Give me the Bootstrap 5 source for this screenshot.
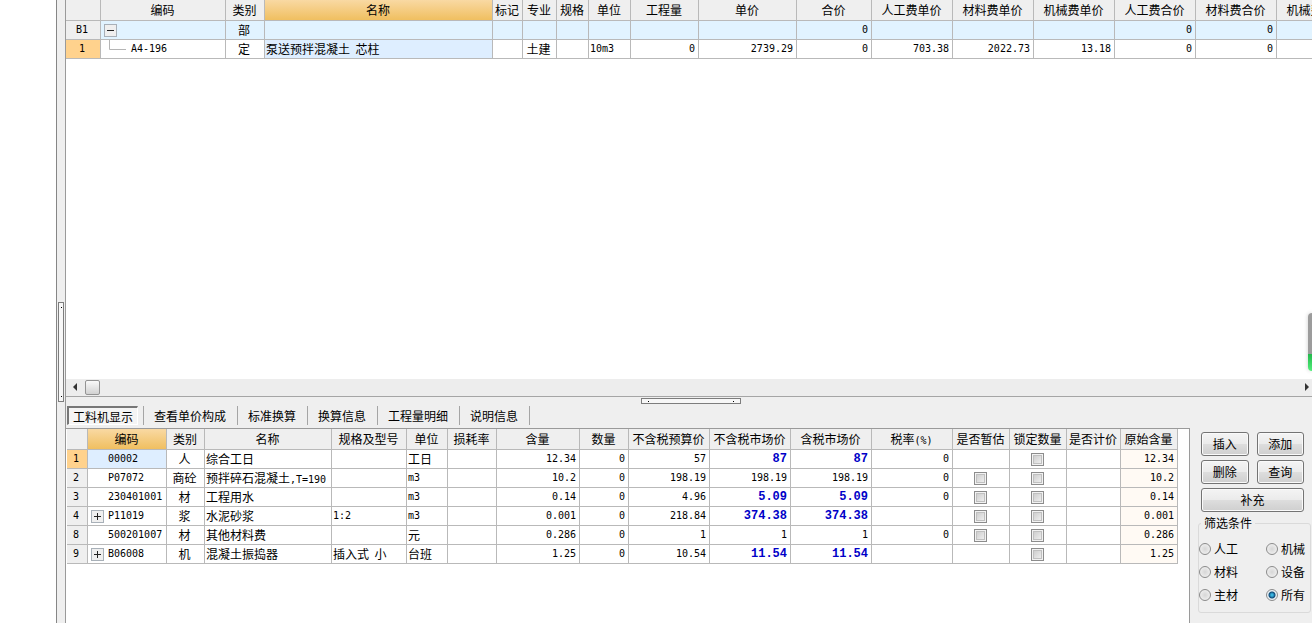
<!DOCTYPE html>
<html lang="zh-CN">
<head>
<meta charset="utf-8">
<meta name="viewport" content="width=device-width, initial-scale=1">
<title>工料机显示</title>
<link rel="stylesheet" href="https://cdn.jsdelivr.net/npm/bootstrap@5.3.0/dist/css/bootstrap.min.css">
<style>
  :root { --face: #efefef; --line: #b9b9b9; --edge: #9a9a9a; }
  body { font-family: "Noto Sans CJK SC", sans-serif; font-size: 12px; line-height: 18px; color: #000; background: #fff; }
  .asc { font-family: "DejaVu Sans Mono", monospace; font-size: 10px; }
  span.asc { line-height: 12px; }
  .gutter { width: 56px; }
  .vsplit { width: 10px; background: var(--face); border-left: 1px solid #868686; border-right: 1px solid var(--edge); padding: 0 1px 221px; }
  .grip { border: 1px solid #7d7d7d; background: #f7f7f7; padding: 4px 1px; }
  .grip i { width: 1px; height: 1px; background: #000; }
  .vsplit .grip { height: 100px; width: 6px; }
  .hsplit { height: 9px; padding-top: 1px; padding-left: 4px; }
  .hsplit .grip { width: 100px; height: 6px; padding: 1px 6px; }

  .grid { border-collapse: separate; border-spacing: 0; table-layout: fixed; width: 100px; }
  .grid th, .grid td { height: 19px; padding: 0 3px 0 1px; border-right: 1px solid var(--line); border-bottom: 1px solid var(--line); white-space: nowrap; overflow: hidden; font-weight: 400; line-height: 18px; vertical-align: middle; }
  .grid thead th { height: 21px; padding: 0 1px 0 0; text-align: center; background: var(--face); line-height: 20px; }
  .grid thead th.hot { background: linear-gradient(#f9d9a3, #f0bf60); }
  .grid tbody th { background: var(--face); text-align: center; }
  .grid tbody tr.cur th { background: #ffd28d; }
  .grid .num { font-family: "DejaVu Sans Mono", monospace; font-size: 10px; text-align: right; }
  .grid .price { font: bold 12px/18px "Liberation Mono", monospace; color: #0000c8; text-align: right; }
  .grid .sel { background: #deeeff; }
  .grid .orig { background: #fffaf4; }
  .grid tr.section td { background: #e1f3ff; }
  .grid .code { padding: 0; }
  .node { width: 20px; height: 18px; padding-left: 3px; flex: none; }
  .toggle { width: 13px; height: 13px; padding: 0; border: 1px solid #a8b0b8; background: #efefef; color: #222; flex: none; display: flex; }

  .hbar { height: 17px; background: #ededed; padding: 0 2px 1px 6px; }
  .thumb { width: 15px; height: 15px; border: 1px solid #949494; border-radius: 2px; background: linear-gradient(#fafafa, #d2d2d2); margin-left: 7px; }
  .lower { background: var(--face); border-top: 1px solid #a5a5a5; min-height: 227px; }
  .modes { height: 22px; }
  .modes li { border-right: 1px solid #a5a5a5; height: 19px; }
  .modes button { display: block; height: 19px; border: 0; background: transparent; padding: 0 11px 0 10px; font-size: 12px; line-height: 18px; color: #000; }
  .modes .mode-on { border: 1px solid #fff; border-top: 2px solid #777; border-left: 2px solid #777; padding: 0 4px; line-height: 15px; background: #f4f4f4; margin: 0 5px 0 1px; }
  .detail { border-top: 1px solid var(--edge); border-right: 1px solid var(--edge); padding-left: 1px; background: #fff; }

  .side { width: 122px; padding: 4px 8px 0 11px; flex: none; }
  .side .btn { font-size: 12px; line-height: 20px; padding: 0; height: 24px; color: #000; border: 1px solid #747474; border-radius: 3px; background: linear-gradient(#f4f4f4, #ebebeb 48%, #dddddd 52%, #cfcfcf); box-shadow: inset 0 0 0 1px #fafafa; }
  .filter { border: 1px solid #dadada; border-radius: 3px; margin: 3px -7px 0 -3px; padding: 6px 0 6px; }
  .filter legend { float: none; width: auto; font-size: 12px; line-height: 16px; margin: 0 0 0 2px; padding: 0 3px; }
  .filter label { height: 23px; gap: 3px; }
  .filter .opt { width: 67px; }
  .filter input { appearance: none; width: 12px; height: 12px; margin: 0; border: 1px solid #8b8b8b; border-radius: 50%; background: radial-gradient(#d6d6d6, #f6f6f6); flex: none; }
  .filter input:checked { background: radial-gradient(circle, #38b5e0 0 1px, #0f4a78 3px, #e8f0f5 4px); }
  .tick { appearance: none; display: block; width: 13px; height: 13px; margin: 0 auto; border: 1px solid #8c8c8c; background: linear-gradient(135deg, #c6c6c6, #f6f6f6); box-shadow: inset 0 0 0 1px #f2f2f2, inset 0 0 0 2px #c0c0c0; }
  .meter { right: 0; bottom: 252px; width: 4px; height: 58px; border-radius: 4px 0 0 4px; background: linear-gradient(#9c9c9c 0 41px, #22b84c 41px, #52ee7a); box-shadow: 0 0 4px #ccc; }
</style>
</head>
<body>
<div class="d-flex min-vh-100 overflow-hidden position-relative">
  <div class="gutter flex-shrink-0"></div>
  <div class="vsplit flex-shrink-0 d-flex align-items-end">
    <div class="grip d-flex flex-column justify-content-between align-items-center"><i></i><i></i></div>
  </div>
  <main class="d-flex flex-column flex-grow-1 overflow-hidden">
    <section class="flex-grow-1 d-flex flex-column">
      <div class="flex-grow-1 overflow-hidden">
        <table class="grid">
          <colgroup><col style="width:35px"><col style="width:125px"><col style="width:39px"><col style="width:228px"><col style="width:30px"><col style="width:34px"><col style="width:32px"><col style="width:42px"><col style="width:68px"><col style="width:98px"><col style="width:75px"><col style="width:81px"><col style="width:81px"><col style="width:81px"><col style="width:81px"><col style="width:81px"><col style="width:81px"></colgroup>
          <thead><tr><th></th><th>编码</th><th>类别</th><th class="hot">名称</th><th>标记</th><th>专业</th><th>规格</th><th>单位</th><th>工程量</th><th>单价</th><th>合价</th><th>人工费单价</th><th>材料费单价</th><th>机械费单价</th><th>人工费合价</th><th>材料费合价</th><th>机械费合价</th></tr></thead>
          <tbody>
            <tr class="section"><th class="asc">B1</th><td class="code"><div class="node d-flex align-items-center"><button class="toggle" aria-label="折叠"><svg width="11" height="11"><path d="M2 5.500h7" stroke="currentColor"/></svg></button></div></td><td class="text-center">部</td><td></td><td></td><td></td><td></td><td></td><td></td><td></td><td class="num">0</td><td></td><td></td><td></td><td class="num">0</td><td class="num">0</td><td></td></tr>
            <tr class="cur"><th class="asc">1</th><td class="code"><div class="d-flex align-items-center"><svg width="30" height="18" class="flex-shrink-0"><path d="M8.500 0V9.500H25" fill="none" stroke="#b5b5b5"/></svg><span class="asc">A4-196</span></div></td><td class="text-center">定</td><td class="sel">泵送预拌混凝土&nbsp; 芯柱</td><td></td><td class="text-center">土建</td><td></td><td class="asc">10m3</td><td class="num">0</td><td class="num">2739.29</td><td class="num">0</td><td class="num">703.38</td><td class="num">2022.73</td><td class="num">13.18</td><td class="num">0</td><td class="num">0</td><td></td></tr>
          </tbody>
        </table>
      </div>
      <div class="hbar d-flex align-items-center">
        <svg width="6" height="8"><path d="M5 0v8L1 4z" fill="#333"/></svg>
        <div class="thumb"></div>
        <svg class="ms-auto" width="6" height="8"><path d="M1 0v8l4-4z" fill="#333"/></svg>
      </div>
    </section>
    <section class="lower d-flex flex-column">
      <div class="hsplit d-flex justify-content-center align-items-start">
        <div class="grip d-flex justify-content-between align-items-center"><i></i><i></i></div>
      </div>
      <ul class="modes list-unstyled d-flex m-0">
        <li><button class="mode-on">工料机显示</button></li>
        <li><button>查看单价构成</button></li>
        <li><button>标准换算</button></li>
        <li><button>换算信息</button></li>
        <li><button>工程量明细</button></li>
        <li><button>说明信息</button></li>
      </ul>
      <div class="d-flex flex-grow-1">
        <div class="detail flex-grow-1 overflow-hidden">
          <table class="grid">
            <colgroup><col style="width:21px"><col style="width:79px"><col style="width:38px"><col style="width:127px"><col style="width:75px"><col style="width:41px"><col style="width:49px"><col style="width:83px"><col style="width:49px"><col style="width:81px"><col style="width:81px"><col style="width:81px"><col style="width:81px"><col style="width:57px"><col style="width:57px"><col style="width:54px"><col style="width:57px"></colgroup>
            <thead><tr><th></th><th class="hot">编码</th><th>类别</th><th>名称</th><th>规格及型号</th><th>单位</th><th>损耗率</th><th>含量</th><th>数量</th><th>不含税预算价</th><th>不含税市场价</th><th>含税市场价</th><th>税率<span class="asc">(%)</span></th><th>是否暂估</th><th>锁定数量</th><th>是否计价</th><th>原始含量</th></tr></thead>
            <tbody>
              <tr class="cur"><th class="asc">1</th><td class="code sel"><div class="d-flex align-items-center"><span class="node"></span><span class="asc">00002</span></div></td><td class="text-center">人</td><td>综合工日</td><td></td><td>工日</td><td></td><td class="num">12.34</td><td class="num">0</td><td class="num">57</td><td class="price">87</td><td class="price">87</td><td class="num">0</td><td></td><td><input type="checkbox" class="tick" aria-label="锁定数量"></td><td></td><td class="num orig">12.34</td></tr>
              <tr><th class="asc">2</th><td class="code"><div class="d-flex align-items-center"><span class="node"></span><span class="asc">P07072</span></div></td><td class="text-center">商砼</td><td>预拌碎石混凝土<span class="asc">,T=190</span></td><td></td><td class="asc">m3</td><td></td><td class="num">10.2</td><td class="num">0</td><td class="num">198.19</td><td class="num">198.19</td><td class="num">198.19</td><td class="num">0</td><td><input type="checkbox" class="tick" aria-label="是否暂估"></td><td><input type="checkbox" class="tick" aria-label="锁定数量"></td><td></td><td class="num orig">10.2</td></tr>
              <tr><th class="asc">3</th><td class="code"><div class="d-flex align-items-center"><span class="node"></span><span class="asc">230401001</span></div></td><td class="text-center">材</td><td>工程用水</td><td></td><td class="asc">m3</td><td></td><td class="num">0.14</td><td class="num">0</td><td class="num">4.96</td><td class="price">5.09</td><td class="price">5.09</td><td class="num">0</td><td><input type="checkbox" class="tick" aria-label="是否暂估"></td><td><input type="checkbox" class="tick" aria-label="锁定数量"></td><td></td><td class="num orig">0.14</td></tr>
              <tr><th class="asc">4</th><td class="code"><div class="d-flex align-items-center"><span class="node d-flex align-items-center"><button class="toggle" aria-label="展开"><svg width="11" height="11"><path d="M2 5.500h7M5.500 2v7" stroke="currentColor"/></svg></button></span><span class="asc">P11019</span></div></td><td class="text-center">浆</td><td>水泥砂浆</td><td class="asc">1:2</td><td class="asc">m3</td><td></td><td class="num">0.001</td><td class="num">0</td><td class="num">218.84</td><td class="price">374.38</td><td class="price">374.38</td><td></td><td><input type="checkbox" class="tick" aria-label="是否暂估"></td><td><input type="checkbox" class="tick" aria-label="锁定数量"></td><td></td><td class="num orig">0.001</td></tr>
              <tr><th class="asc">8</th><td class="code"><div class="d-flex align-items-center"><span class="node"></span><span class="asc">500201007</span></div></td><td class="text-center">材</td><td>其他材料费</td><td></td><td>元</td><td></td><td class="num">0.286</td><td class="num">0</td><td class="num">1</td><td class="num">1</td><td class="num">1</td><td class="num">0</td><td><input type="checkbox" class="tick" aria-label="是否暂估"></td><td><input type="checkbox" class="tick" aria-label="锁定数量"></td><td></td><td class="num orig">0.286</td></tr>
              <tr><th class="asc">9</th><td class="code"><div class="d-flex align-items-center"><span class="node d-flex align-items-center"><button class="toggle" aria-label="展开"><svg width="11" height="11"><path d="M2 5.500h7M5.500 2v7" stroke="currentColor"/></svg></button></span><span class="asc">B06008</span></div></td><td class="text-center">机</td><td>混凝土振捣器</td><td>插入式&nbsp; 小</td><td>台班</td><td></td><td class="num">1.25</td><td class="num">0</td><td class="num">10.54</td><td class="price">11.54</td><td class="price">11.54</td><td></td><td></td><td><input type="checkbox" class="tick" aria-label="锁定数量"></td><td></td><td class="num orig">1.25</td></tr>
            </tbody>
          </table>
        </div>
        <aside class="side">
          <div class="row m-0">
            <div class="col-6 ps-0 pe-1 mb-1"><button class="btn w-100">插入</button></div>
            <div class="col-6 ps-1 pe-0 mb-1"><button class="btn w-100">添加</button></div>
            <div class="col-6 ps-0 pe-1 mb-1"><button class="btn w-100">删除</button></div>
            <div class="col-6 ps-1 pe-0 mb-1"><button class="btn w-100">查询</button></div>
            <div class="col-12 p-0"><button class="btn w-100">补充</button></div>
          </div>
          <fieldset class="filter">
            <legend>筛选条件</legend>
            <div class="d-flex"><label class="opt d-flex align-items-center"><input type="radio" name="kind">人工</label><label class="d-flex align-items-center"><input type="radio" name="kind">机械</label></div>
            <div class="d-flex"><label class="opt d-flex align-items-center"><input type="radio" name="kind">材料</label><label class="d-flex align-items-center"><input type="radio" name="kind">设备</label></div>
            <div class="d-flex"><label class="opt d-flex align-items-center"><input type="radio" name="kind">主材</label><label class="d-flex align-items-center"><input type="radio" name="kind" checked>所有</label></div>
          </fieldset>
        </aside>
      </div>
    </section>
  </main>
  <div class="meter position-absolute"></div>
</div>
<script src="https://cdn.jsdelivr.net/npm/bootstrap@5.3.0/dist/js/bootstrap.bundle.min.js"></script>
</body>
</html>
